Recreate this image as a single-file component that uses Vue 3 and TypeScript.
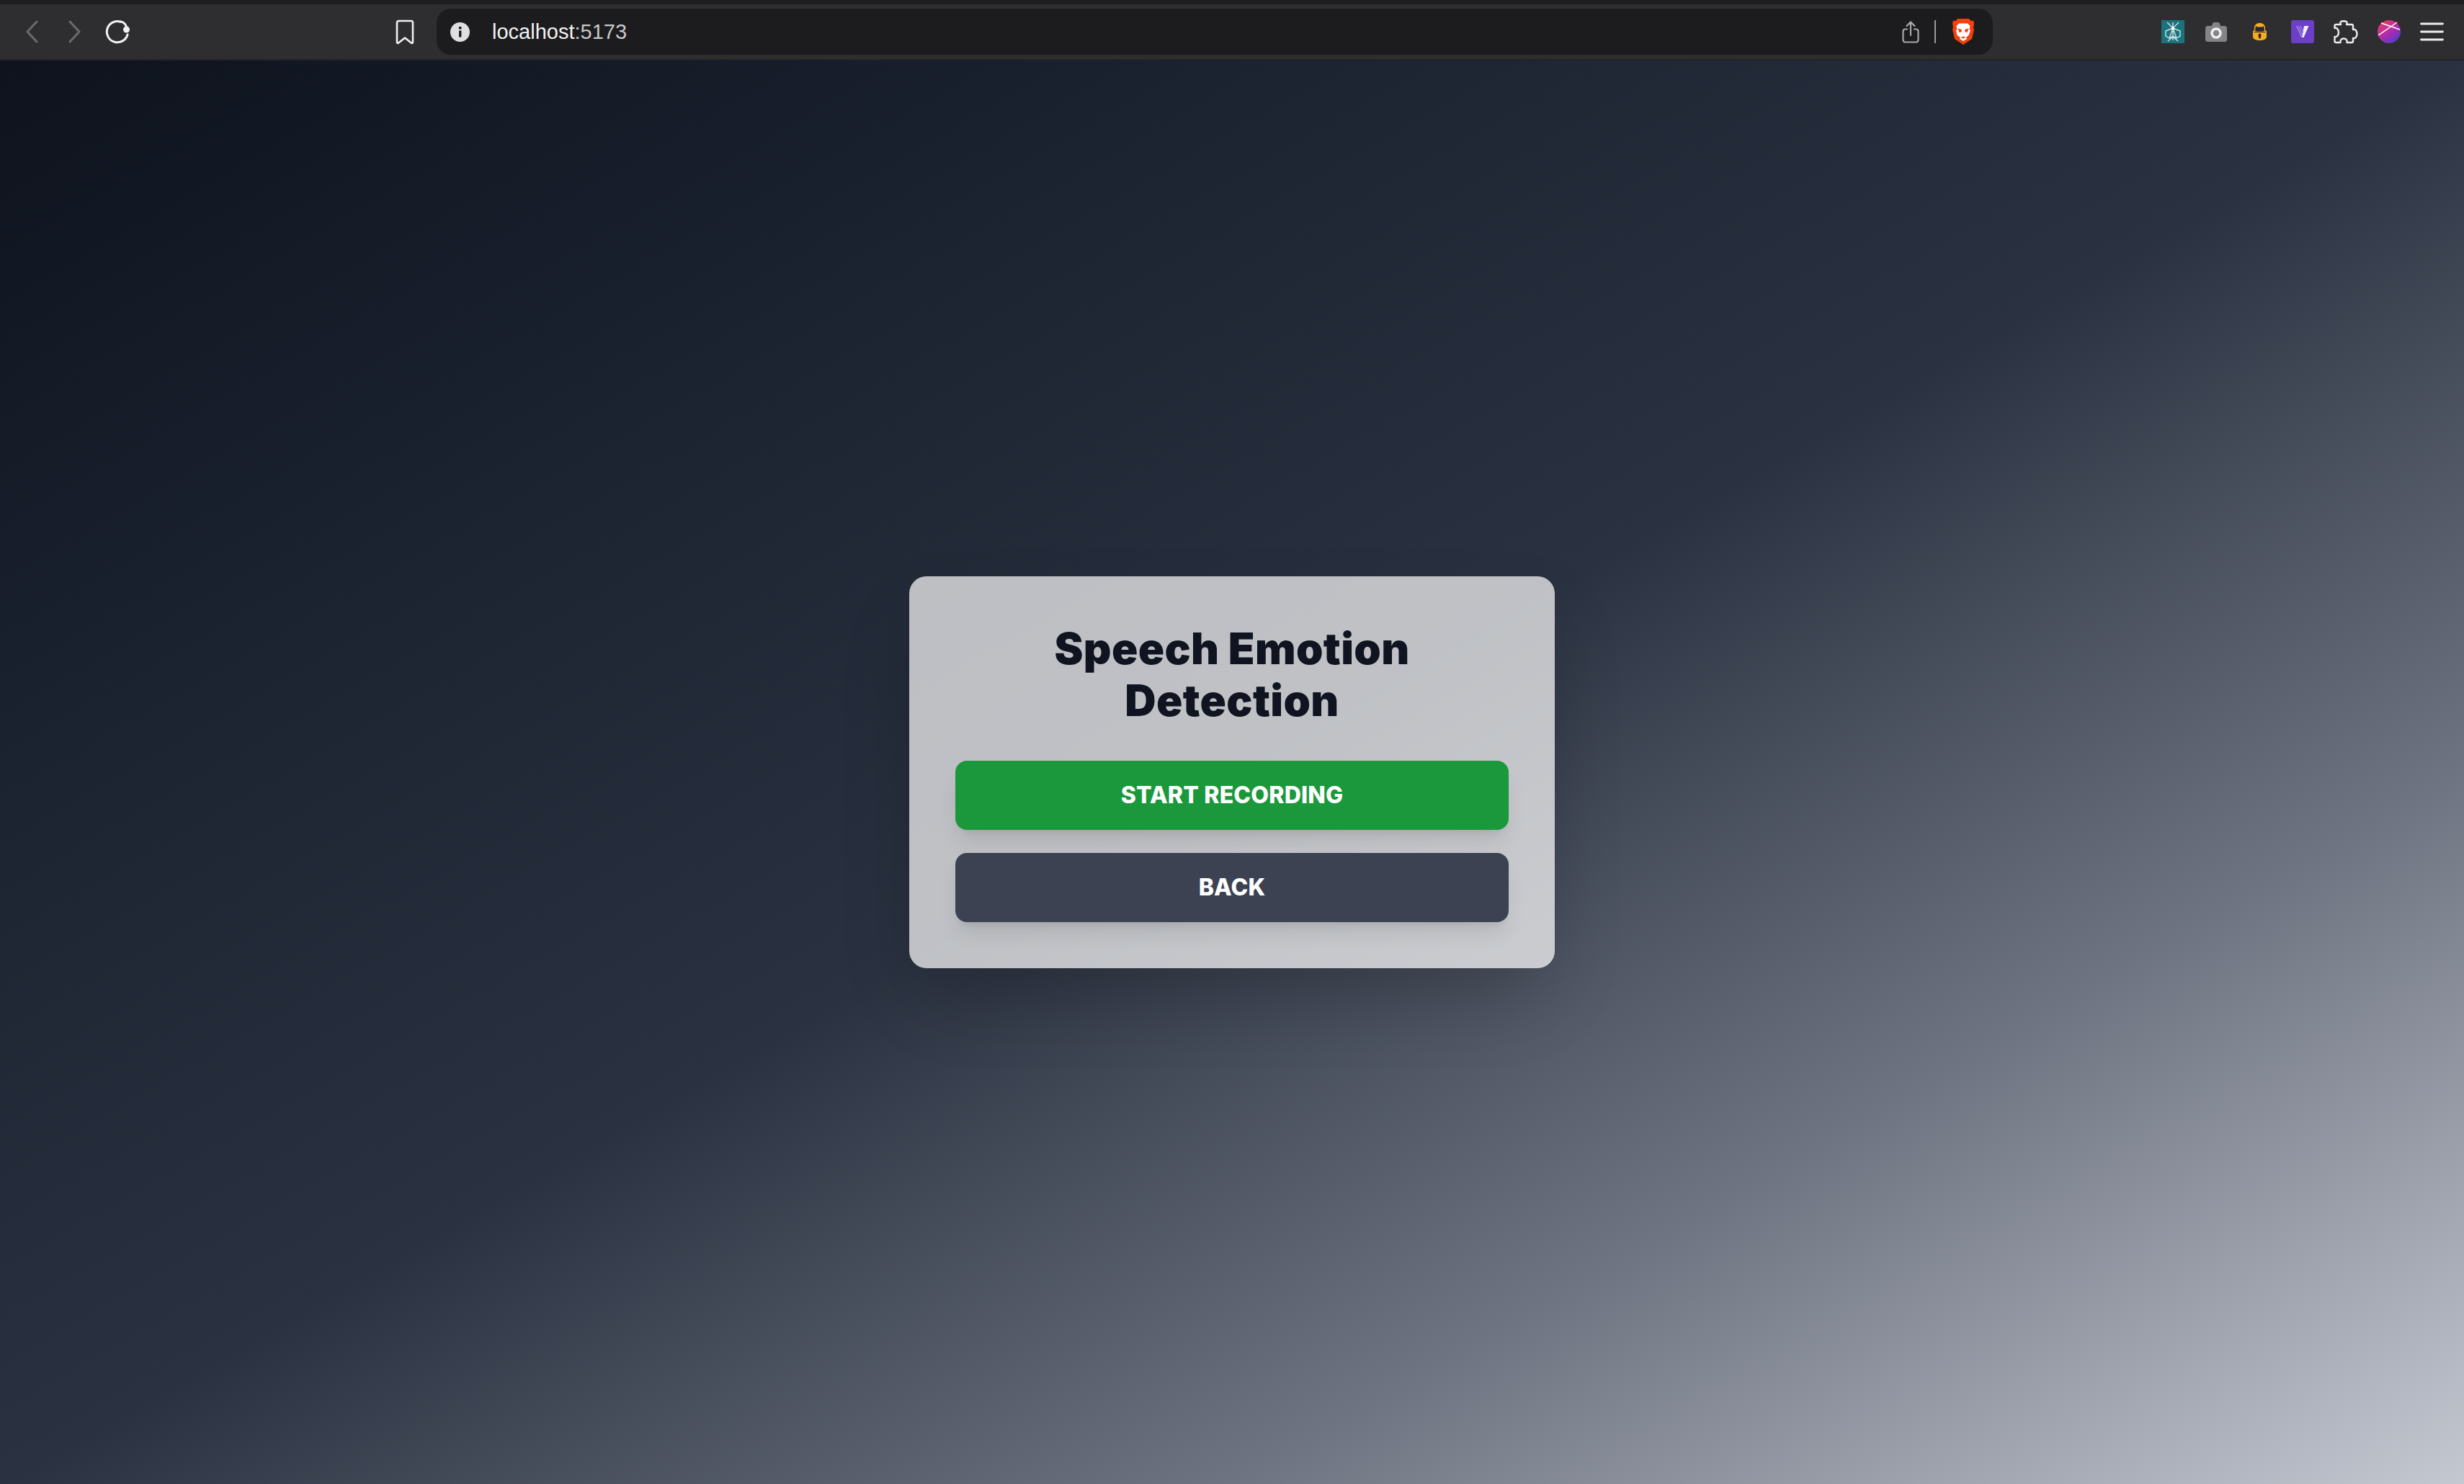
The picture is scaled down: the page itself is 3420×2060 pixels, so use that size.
<script setup lang="ts">
</script>

<template>
  <div class="window">
    <header class="chrome">
      <div class="nav">
        <svg class="ic back" width="18" height="32" viewBox="0 0 18 32"><path d="M16 2 3 16l13 14" fill="none" stroke="#6b6b6d" stroke-width="3" stroke-linecap="round" stroke-linejoin="round"/></svg>
        <svg class="ic fwd" width="18" height="32" viewBox="0 0 18 32"><path d="M2 2l13 14L2 30" fill="none" stroke="#6b6b6d" stroke-width="3" stroke-linecap="round" stroke-linejoin="round"/></svg>
        <svg class="ic reload" width="36" height="34" viewBox="0 0 36 34"><path d="M21 3.200A14.600 14.600 0 1 0 31 21" fill="none" stroke="#f2f2f2" stroke-width="3" stroke-linecap="round"/><circle cx="29.500" cy="14" r="4.500" fill="#f2f2f2"/><path d="M21 3c4 .5 7 3 8.500 7" fill="none" stroke="#f2f2f2" stroke-width="3" stroke-linecap="round"/></svg>
        <svg class="ic mark" width="26" height="35" viewBox="0 0 26 35"><path d="M4.500 2h17A2.500 2.500 0 0 1 24 4.500V31.500c0 1.500-1.200 1.900-2.200 1L13 25.500 4.200 32.500c-1 .9-2.200.5-2.200-1V4.500A2.500 2.500 0 0 1 4.500 2Z" fill="none" stroke="#f0f0f0" stroke-width="2.600" stroke-linejoin="round"/></svg>
      </div>
      <div class="url">
        <svg class="info" width="27" height="27" viewBox="0 0 27 27"><circle cx="13.500" cy="13.500" r="13.500" fill="#dfdfe1"/><rect x="12" y="11.500" width="3.400" height="9" fill="#1c1c1e"/><circle cx="13.700" cy="7.800" r="2" fill="#1c1c1e"/></svg>
        <span class="addr">localhost<span class="port">:5173</span></span>
        <span class="url-fill"></span>
        <svg class="share" width="24" height="31" viewBox="0 0 24 31"><path d="M7 11.500H4.500A3 3 0 0 0 1.500 14.500V26.500A3 3 0 0 0 4.500 29.500H19.500A3 3 0 0 0 22.500 26.500V14.500A3 3 0 0 0 19.500 11.500H17M12 20V2M6.500 7 12 1.500 17.500 7" fill="none" stroke="#a8a8aa" stroke-width="2.200" stroke-linecap="round" stroke-linejoin="round"/></svg>
        <span class="divider"></span>
        <svg class="brave" width="30" height="36" viewBox="0 0 30 36"><path d="M7 0h16l2.500 3L29 2.500 30 7l-1 5 1 3-3 13-12 8-12-8L0 15l1-3L0 7l1-4.500L4.500 3Z" fill="#f4400f"/><path d="M9 6.500h12l3.500 3.500-1 5 1.500 1-2.500 7L19 26l1 2-5 3-5-3 1-2-4.500-3L5 16l1.500-1-1-5Z" fill="#fff"/><path d="M7.500 13.500 13 15l-.5 3.500-3 .5ZM22.500 13.500 17 15l.5 3.500 3 .5ZM11.500 26 15 24.500 18.500 26 15 27.500Z" fill="#f4400f"/></svg>
      </div>
      <div class="tools">
        <svg width="32" height="32" viewBox="0 0 32 32"><rect width="32" height="32" fill="#1c737d"/><path d="M16 3v25M8 3l8 8 8-8M16 11 6 15v7l5 3 5-14 5 14 5-3v-7ZM9 29l7-6 7 6M11 25l5-3 5 3" fill="none" stroke="#cde4e4" stroke-width="1.400"/><circle cx="16" cy="11" r="2.200" fill="#fff"/></svg>
        <svg class="t-cam" width="30" height="27" viewBox="0 0 30 27"><path d="M3.500 5H9l1-3.200Q10.500 0 12.500 0h5q2 0 2.500 1.800L21 5h5.500A3.500 3.500 0 0 1 30 8.500v15a3.500 3.500 0 0 1-3.500 3.500h-23A3.500 3.500 0 0 1 0 23.500v-15A3.500 3.500 0 0 1 3.500 5Z" fill="#858587"/><circle cx="15" cy="15" r="6" fill="none" stroke="#efefef" stroke-width="3.500"/></svg>
        <svg class="t-bug" width="19" height="24" viewBox="0 0 19 24"><path d="M9.500 0C14 0 17 2.500 17 7v3l2 1v8c0 3-4 5-9.500 5S0 22 0 19v-8l2-1V7C2 2.500 5 0 9.500 0Z" fill="#f3ae1d"/><path d="M4 4l2 1.500h7L15 4l1 6.500-2 1H5l-2-1ZM1.500 12h16v1H1.500ZM9.500 14.500c1.200 0 2 1 2 2.500l-1 4.500h-2l-1-4.500c0-1.500.8-2.500 2-2.500Z" fill="#2a2333"/></svg>
        <svg class="t-vee" width="32" height="32" viewBox="0 0 32 32"><rect width="32" height="32" rx="3" fill="#6b3fc7"/><path d="M18 8h6.500L17.500 24H15Z" fill="#f4f0fc"/><path d="M7.500 8 15 24M10 8l6 13M13 8l4 9" fill="none" stroke="#a98fe8" stroke-width="1.200"/></svg>
        <svg class="t-puz" width="34" height="33" viewBox="0 0 34 33"><path d="M4 6H10C8 2 11 1.200 14 1.200S20 2 18 6H25Q27 6 27 8V13C30 12 32.500 15 32.500 19S30 26 27 25V29Q27 31 25 31H18.500C19 27 17 25.500 14 25.500S9 27 9.500 31H4Q1.500 31 1.500 29V23C5 24 7 20 7 17S5 10 1.500 11V8Q1.500 6 4 6Z" fill="none" stroke="#ececec" stroke-width="2.400" stroke-linejoin="round"/></svg>
        <svg class="t-orb" width="32" height="32" viewBox="0 0 32 32"><defs><linearGradient id="orb" x1="0.200" y1="0.100" x2="0.800" y2="0.950"><stop offset="0" stop-color="#e33a6b"/><stop offset="0.550" stop-color="#a92bb0"/><stop offset="1" stop-color="#4d3fc8"/></linearGradient></defs><circle cx="16" cy="16" r="16" fill="url(#orb)"/><path d="M5 4 31 13M1 21 27 3" stroke="#fff" stroke-width="1.500"/></svg>
        <svg class="t-menu" width="33" height="26" viewBox="0 0 33 26"><path d="M1.500 2h30M1.500 13h30M1.500 24h30" stroke="#ececec" stroke-width="2.800" stroke-linecap="round"/></svg>
      </div>
    </header>
    <main class="page">
      <section class="card">
        <h1>Speech Emotion Detection</h1>
        <button class="btn start" type="button">START RECORDING</button>
        <button class="btn back-btn" type="button">BACK</button>
      </section>
    </main>
  </div>
</template>

<style>
html, body { margin: 0; background: #111827; }
</style>

<style scoped>
.window { width: 3420px; height: 2060px; display: flex; flex-direction: column; overflow: hidden; font-family: "Inter", "Liberation Sans", sans-serif; }
.chrome { flex: none; height: 84px; box-sizing: border-box; border-top: 6px solid #1d1d1f; border-bottom: 2px solid #232325; background: #2e2e30; display: flex; align-items: center; }
.nav { display: flex; align-items: center; padding-left: 35px; width: 606px; box-sizing: border-box; flex: none; }
.ic { display: block; flex: none; }
.fwd { margin-left: 42px; }
.reload { margin-left: 33px; }
.mark { margin-left: 367px; }
.url { flex: none; width: 2160px; height: 64px; border-radius: 20px; background: #1c1c1e; display: flex; align-items: center; }
.info { margin-left: 19px; flex: none; }
.addr { margin-left: 31px; font-family: "Liberation Sans", sans-serif; font-size: 29px; color: #f2f2f2; }
.port { color: #c8c8ca; }
.url-fill { flex: 1; }
.share { flex: none; margin-right: 21px; }
.divider { width: 2px; height: 32px; background: #9a9a9c; flex: none; margin-right: 23px; }
.brave { flex: none; margin-right: 26px; }
.tools { flex: 1; display: flex; align-items: center; padding-left: 234px; }
.tools svg { display: block; flex: none; }
.t-cam { margin-left: 29px; }
.t-bug { margin-left: 36px; }
.t-vee { margin-left: 34px; }
.t-puz { margin-left: 27px; }
.t-orb { margin-left: 27px; }
.t-menu { margin-left: 27px; }
.page { flex: 1; min-height: 0; display: flex; align-items: center; justify-content: center; background: linear-gradient(to bottom right, #0e131d 0%, #1b2230 25%, #2a3140 50%, #6e7481 75%, #c4c8d1 100%); }
.card { width: 896px; box-sizing: border-box; padding: 64px; border-radius: 24px; background: rgba(255, 255, 255, 0.7); box-shadow: 0 50px 100px -24px rgba(0, 0, 0, 0.25); display: flex; flex-direction: column; gap: 32px; }
h1 { margin: 0 0 16px; font-size: 60px; line-height: 72px; font-weight: 900; letter-spacing: 0.4px; text-align: center; color: #0f1420; }
.btn { height: 96px; border: 0; border-radius: 16px; font: 800 32px/48px "Inter", "Liberation Sans", sans-serif; color: #fff; letter-spacing: 0.2px; box-shadow: 0 20px 30px -6px rgba(0, 0, 0, 0.1), 0 8px 12px -8px rgba(0, 0, 0, 0.1); }
.start { background: #1b983b; }
.back-btn { background: #3c4251; }
</style>
